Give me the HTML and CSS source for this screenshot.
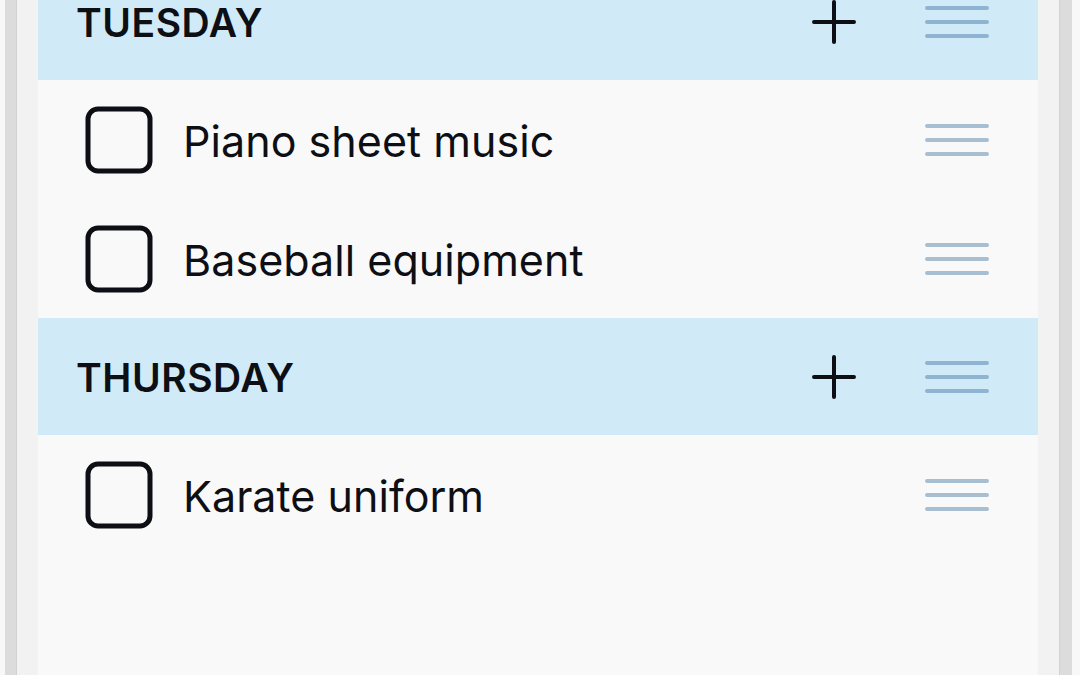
FILE: index.html
```html
<!DOCTYPE html>
<html lang="en">
<head>
  <meta charset="UTF-8">
  <title>Packing list</title>
  <link rel="stylesheet" href="styles.css">
</head>
<body>

<div class="device">
  <div class="bezel left"></div>

  <main class="screen">
    <ul class="list">
      <!-- ========= TUESDAY ========= -->
      <li class="day">
        <span class="day-name">TUESDAY</span>
        <svg class="plus" viewBox="0 0 44 44"><path d="M22 2v40M2 22h40"/></svg>
        <svg class="grip" viewBox="0 0 64 32"><path d="M2 2h60M2 16h60M2 30h60"/></svg>
      </li>
      <li class="item">
        <svg class="check" viewBox="0 0 68 68"><rect x="3" y="3" width="62" height="62" rx="10"/></svg>
        <span class="label">Piano sheet music</span>
        <svg class="grip" viewBox="0 0 64 32"><path d="M2 2h60M2 16h60M2 30h60"/></svg>
      </li>
      <li class="item">
        <svg class="check" viewBox="0 0 68 68"><rect x="3" y="3" width="62" height="62" rx="10"/></svg>
        <span class="label">Baseball equipment</span>
        <svg class="grip" viewBox="0 0 64 32"><path d="M2 2h60M2 16h60M2 30h60"/></svg>
      </li>

      <!-- ========= THURSDAY ========= -->
      <li class="day">
        <span class="day-name">THURSDAY</span>
        <svg class="plus" viewBox="0 0 44 44"><path d="M22 2v40M2 22h40"/></svg>
        <svg class="grip" viewBox="0 0 64 32"><path d="M2 2h60M2 16h60M2 30h60"/></svg>
      </li>
      <li class="item">
        <svg class="check" viewBox="0 0 68 68"><rect x="3" y="3" width="62" height="62" rx="10"/></svg>
        <span class="label">Karate uniform</span>
        <svg class="grip" viewBox="0 0 64 32"><path d="M2 2h60M2 16h60M2 30h60"/></svg>
      </li>
    </ul>
  </main>

  <div class="bezel right"></div>
</div>

</body>
</html>
```

FILE: styles.css
```css
/* ---------- page ---------- */
html, body {
  margin: 0;
  padding: 0;
  height: 100%;
  overflow: hidden;
  background: #f7f7f7;
  font-family: Inter, "Noto Sans", sans-serif;
  color: #0d0f14;
}

.device { display: flex; height: 675px; }

/* phone frame strips on both sides */
.bezel { flex-shrink: 0; background: #f2f2f2; }
.bezel.left  { width: 33px; border-left: 5px solid #f8f8f8; box-shadow: inset 11px 0 0 #dcdcdc, inset 12px 0 0 #d2d2d2; }
.bezel.right { width: 34px; border-right: 8px solid #f8f8f8; box-shadow: inset -12px 0 0 #dcdcdc, inset -13px 0 0 #d2d2d2; }

.screen { flex: 1; background: #f9f9f9; overflow: hidden; }

/* ---------- list ---------- */
.list { list-style: none; margin: -37px 0 0; padding: 0; }

.day, .item {
  display: flex;
  align-items: center;
  padding: 0 49px 0 40px;
}

.day { background: #d0ebf7; height: 117px; padding-left: 38px; }
.day-name { flex: 1; font-size: 39px; font-weight: 600; letter-spacing: 0.55px; padding-top: 1px; }

.item { height: 119px; padding-left: 47px; }
.label { flex: 1; font-size: 43px; font-weight: 400; margin-left: 30px; letter-spacing: 0.05px; padding-top: 3px; }

/* icons */
svg { display: block; fill: none; stroke-linecap: round; }
.plus  { width: 44px; height: 44px; stroke: #0d0f14; stroke-width: 4; margin-right: 69px; }
.check { width: 68px; height: 68px; stroke: #0d0f14; stroke-width: 5; }
.grip  { width: 64px; height: 32px; stroke-width: 4; }
.day .grip  { stroke: #8fb4d1; }
.item .grip { stroke: #a8bfd2; }
```
